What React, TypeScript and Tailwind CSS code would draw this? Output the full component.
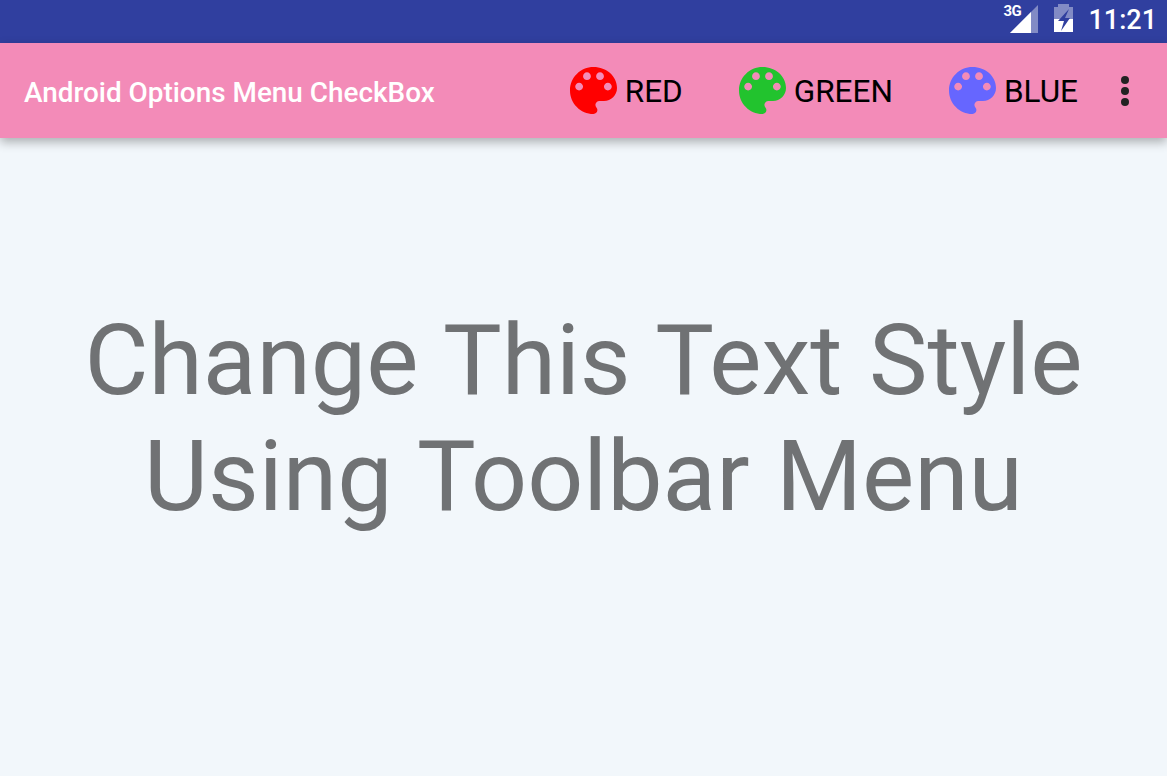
const PALETTE =
  'M12 3c-4.97 0-9 4.03-9 9s4.03 9 9 9c.83 0 1.5-.67 1.5-1.5 0-.39-.15-.74-.39-1.01-.23-.26-.38-.61-.38-.99 0-.83.67-1.5 1.5-1.5H16c2.76 0 5-2.24 5-5 0-4.42-4.03-8-9-8zm-5.5 9c-.83 0-1.5-.67-1.5-1.5S5.67 9 6.5 9 8 9.67 8 10.5 7.33 12 6.5 12zm3-4C8.67 8 8 7.33 8 6.5S8.67 5 9.5 5s1.5.67 1.5 1.5S10.33 8 9.5 8zm5 0c-.83 0-1.5-.67-1.5-1.5S13.67 5 14.5 5s1.5.67 1.5 1.5S15.33 8 14.5 8zm3 4c-.83 0-1.5-.67-1.5-1.5S16.67 9 17.5 9s1.5.67 1.5 1.5-.67 1.5-1.5 1.5z';

function PaletteIcon({ color }: { color: string }) {
  return (
    <svg viewBox="3 3 18 18" className="h-[47px] w-[47px]" fill={color}>
      <path d={PALETTE} />
    </svg>
  );
}

function MenuItem({ color, label, className }: { color: string; label: string; className: string }) {
  return (
    <div className={`flex items-center gap-[8px] ${className}`}>
      <PaletteIcon color={color} />
      <span className="mt-[3px] text-[31.5px] leading-none text-black">{label}</span>
    </div>
  );
}

function StatusBar() {
  return (
    <div className="flex h-[43px] items-start justify-end bg-[#303f9f] pr-[10px]">
      <div className="relative mt-[4px] mr-[15px] h-[30px] w-[37px]">
        <svg viewBox="0 0 37 30" className="h-[30px] w-[37px]">
          <path d="M36 1V29H8z" fill="#fff" fillOpacity="0.4" />
          <path d="M29 8V29H8z" fill="#fff" />
        </svg>
        <span className="absolute -top-[1px] left-[1px] text-[15px] leading-[16px] font-bold tracking-[-0.5px] text-white">3G</span>
      </div>
      <svg viewBox="0 0 19 28" className="mt-[4px] mr-[15px] h-[28px] w-[19px]">
        <path d="M4 0h11v3h4v25H0V3h4z" fill="#fff" fillOpacity="0.4" />
        <path d="M0 15h19v13H0z" fill="#fff" />
        <path d="M15 5L4 17h6l-3 10 9-13h-5z" fill="#303f9f" />
      </svg>
      <span className="mt-[7px] text-[27px] leading-none font-medium text-white">11:21</span>
    </div>
  );
}

export default function App() {
  return (
    <div className="flex h-[776px] w-[1167px] flex-col overflow-hidden bg-[#f2f7fb] font-['Roboto',sans-serif]">
      <StatusBar />
      <div className="relative flex h-[95px] items-center bg-[#f38bb8] pl-[24px] shadow-[0_4px_10px_rgba(0,0,0,0.3)]">
        <span className="mt-[4px] text-[27.9px] leading-none font-medium text-white">Android Options Menu CheckBox</span>
        <div className="ml-auto flex items-center">
          <MenuItem color="#ff0000" label="RED" className="mr-[56px]" />
          <MenuItem color="#22c32e" label="GREEN" className="mr-[56px]" />
          <MenuItem color="#6666ff" label="BLUE" className="mr-[43px]" />
          <div className="mr-[38px] flex flex-col gap-[3px]">
            <span className="h-[8px] w-[8px] rounded-full bg-[#222]" />
            <span className="h-[8px] w-[8px] rounded-full bg-[#222]" />
            <span className="h-[8px] w-[8px] rounded-full bg-[#222]" />
          </div>
        </div>
      </div>
      <div className="flex flex-1 justify-center pt-[165px]">
        <p className="text-center text-[98.5px] leading-[116px] text-[#707274] [word-spacing:2px]">
          Change This Text Style
          <br />
          Using Toolbar Menu
        </p>
      </div>
    </div>
  );
}
